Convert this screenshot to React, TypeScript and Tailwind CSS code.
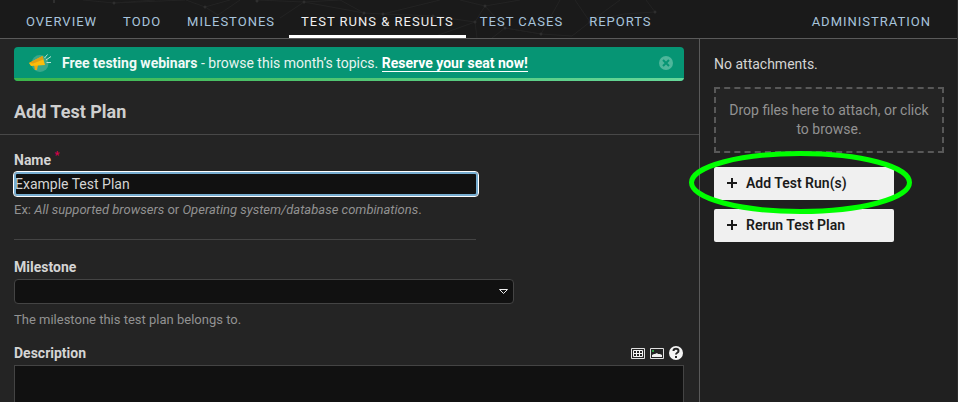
import type { ReactNode } from "react";

const links: { label: string; active?: boolean }[] = [
  { label: "OVERVIEW" },
  { label: "TODO" },
  { label: "MILESTONES" },
  { label: "TEST RUNS & RESULTS", active: true },
  { label: "TEST CASES" },
  { label: "REPORTS" },
];

function Constellation() {
  return (
    <svg
      className="pointer-events-none absolute left-0 top-0 h-[38px] w-[958px]"
      viewBox="0 0 958 38"
      fill="none"
      stroke="#232323"
      aria-hidden="true"
    >
      <path d="M54 0v3" stroke="#444" />
      <path d="M83 0 114 3 155 0M114 3 185 0M186 0 205 7 218 15 240 0M205 7 230 0M218 15 212 30M257 0 304 2 280 18M304 2 364 13 383 14 440 0M304 2 340 0 364 13M364 13 350 30M383 14 433 16 475 22 485 6 505 28 541 34 560 0M485 6 460 0M485 6 520 0M475 22 433 37M475 22 477 38M505 28 492 38M505 28 541 34 572 36 590 22 620 0M590 22 575 0M646 0 655 12 624 14 590 22" />
      <g fill="#2e2e2e" stroke="none">
        <circle cx="114" cy="3" r="1.5" />
        <circle cx="205" cy="7" r="1.5" />
        <circle cx="257" cy="1" r="1.5" />
        <circle cx="304" cy="2" r="1.5" />
        <circle cx="364" cy="13" r="1.5" />
        <circle cx="383" cy="14" r="1.5" />
        <circle cx="433" cy="16" r="1.5" />
        <circle cx="475" cy="22" r="1.5" />
        <circle cx="485" cy="6" r="1.5" />
        <circle cx="505" cy="28" r="1.5" />
        <circle cx="541" cy="34" r="1.5" />
        <circle cx="590" cy="22" r="1.5" />
        <circle cx="655" cy="12" r="1.5" />
      </g>
    </svg>
  );
}

function Megaphone() {
  return (
    <svg width="24" height="20" viewBox="0 0 24 20" fill="none" aria-hidden="true">
      <circle cx="12" cy="10.500" r="8.500" fill="#3aa78a" />
      <path d="M6 12h4l-1 5H7z" fill="#f0a90a" />
      <path d="M1 10 14.500 3l2.500 9-14 1z" fill="#fdbd0b" />
      <path d="M1 10 14.500 3l1 3.500L5 10.500z" fill="#e0a012" />
      <path d="m16.500 5 3-3.500M18 7l5-3.500M18.500 9.500H23" stroke="#b9e6d8" strokeWidth="1" />
    </svg>
  );
}

function PlusIcon() {
  return (
    <svg width="10" height="10" viewBox="0 0 10 10" stroke="#1a1a1a" strokeWidth="2" aria-hidden="true">
      <path d="M5 0v10M0 5h10" />
    </svg>
  );
}

function SideButton({ children }: { children: ReactNode }) {
  return (
    <button
      type="button"
      className="flex h-[33px] w-[180px] items-center gap-[9px] rounded-xs bg-[#f0f0f0] pb-px pl-[13px] text-sm font-semibold text-[#1a1a1a]"
    >
      <PlusIcon />
      {children}
    </button>
  );
}

export default function App() {
  return (
    <div className="flex h-screen flex-col overflow-hidden border-r border-[#2b2b2b] bg-[#242424] font-[Roboto,sans-serif] text-sm text-[#d4d4d4]">
      <header className="relative shrink-0 overflow-hidden border-b border-[#5a5a5a] bg-[#1a1a1a]">
        <Constellation />
        <nav className="relative flex h-[38px] items-stretch gap-[2px] px-[14px] text-[13px] tracking-[1px]">
          {links.map(({ label, active }) => (
            <a
              key={label}
              href="#"
              className={
                active
                  ? "border-b-3 border-white px-3 pt-3 leading-5 whitespace-nowrap text-[#f0f0f0]"
                  : "px-3 pt-3 leading-5 whitespace-nowrap text-[#a8c4dc]"
              }
            >
              {label}
            </a>
          ))}
          <a href="#" className="ml-auto px-3 pt-3 leading-5 text-[#a8c4dc]">
            ADMINISTRATION
          </a>
        </nav>
      </header>

      <div className="flex min-h-0 flex-1">
        <main className="min-w-0 flex-1 overflow-hidden pt-2">
          <div className="mr-[15px] ml-[14px] overflow-hidden rounded bg-[#069574]">
            <div className="flex h-[31px] items-center pl-[14px] pr-[11px]">
              <Megaphone />
              <p className="ml-[10px] flex-1 whitespace-nowrap text-[#e8f4f0]">
                <b className="text-[#f0faf7]">Free testing webinars</b> - browse this month’s topics.{" "}
                <a href="#" className="border-b border-white font-bold text-white">
                  Reserve your seat now!
                </a>
              </p>
              <button type="button" aria-label="Close">
                <svg width="14" height="14" viewBox="0 0 14 14" aria-hidden="true">
                  <circle cx="7" cy="7" r="7" fill="#4eb69b" />
                  <path d="m4 4 6 6M10 4l-6 6" stroke="#069574" strokeWidth="2" />
                </svg>
              </button>
            </div>
            <div className="h-[3px] bg-linear-to-r from-[#3cb54a] to-[#66d79a]" />
          </div>

          <h1 className="mt-[17px] border-b border-[#484848] px-[14px] pb-2 text-lg leading-7 font-bold text-[#cfcfcf]">
            Add Test Plan
          </h1>

          <form className="pt-[15px] pr-[15px] pl-[14px]">
            <label htmlFor="name" className="block leading-5 font-bold">
              Name <span className="align-top text-[11px] leading-none text-[#d9004c]">*</span>
            </label>
            <input
              id="name"
              defaultValue="Example Test Plan"
              className="-ml-px mt-px block h-[26px] w-[466px] max-w-full rounded border border-white bg-[#111] px-px text-sm text-[#d4d4d4] outline-none ring-2 ring-[#77add0] ring-inset"
            />
            <p className="mt-[3px] text-[13px] leading-5 text-[#929292]">
              Ex: <i>All supported browsers</i> or <i>Operating system/database combinations</i>.
            </p>
            <hr className="mt-[19px] w-[462px] max-w-full border-[#444]" />

            <label htmlFor="milestone" className="mt-[17px] block leading-5 font-bold">
              Milestone
            </label>
            <div className="relative mt-[2px] w-[500px] max-w-full">
              <select
                id="milestone"
                className="block h-[25px] w-full appearance-none rounded border border-[#444] bg-[#111] outline-none"
              >
                <option value=""></option>
              </select>
              <svg
                className="pointer-events-none absolute top-[10px] right-[6px]"
                width="9"
                height="6"
                viewBox="0 0 9 6"
                fill="none"
                stroke="#f0f0f0"
                aria-hidden="true"
              >
                <path d="M.5.5h8l-4 4z" />
              </svg>
            </div>
            <p className="mt-[6px] text-[13px] leading-5 text-[#929292]">The milestone this test plan belongs to.</p>

            <div className="mt-[13px] flex items-center justify-between">
              <label htmlFor="description" className="leading-5 font-bold">
                Description
              </label>
              <div className="flex items-center gap-[5px] pr-px">
                <button type="button" aria-label="Insert table">
                  <svg width="14" height="11" viewBox="0 0 14 11" fill="none" aria-hidden="true">
                    <path d="M.5.5h13v10H.5z" stroke="#e0e0e0" />
                    <path d="M2.500 2.500h9v6h-9zM2.500 5.500h9M5.500 2.500v6M8.500 2.500v6" stroke="#f4f4f4" />
                  </svg>
                </button>
                <button type="button" aria-label="Insert image">
                  <svg width="14" height="11" viewBox="0 0 14 11" fill="none" aria-hidden="true">
                    <path d="M.5.5h13v10H.5z" stroke="#e0e0e0" />
                    <path d="M2 2h2v2H2z" fill="#2e9e42" />
                    <path d="M2 9V7l2-1h1l2-1 1 1h2l2 1v2z" fill="#f0f0f0" />
                  </svg>
                </button>
                <button type="button" aria-label="Help">
                  <svg width="14" height="14" viewBox="0 0 14 14" fill="none" aria-hidden="true">
                    <circle cx="7" cy="7" r="7" fill="#f4f4f4" />
                    <path d="M4.500 5c0-3 5-3 5 0 0 2-2.500 1.500-2.500 3.500M7 10v2" stroke="#242424" strokeWidth="2" />
                  </svg>
                </button>
              </div>
            </div>
            <textarea
              id="description"
              className="mt-[2px] block h-40 w-full resize-none border border-[#444] bg-[#111] outline-none"
            />
          </form>
        </main>

        <aside className="w-[258px] shrink-0 border-l border-[#5a5a5a] bg-[#202020] px-[14px] pt-[15px]">
          <p className="leading-5">No attachments.</p>
          <div className="mt-[13px] flex h-[66px] w-[230px] items-center border-2 border-dashed border-[#585858] bg-[#242424] px-3 text-center leading-[19px] text-[#929292]">
            Drop files here to attach, or click to browse.
          </div>
          <div className="relative mt-[14px] flex flex-col gap-[9px]">
            <SideButton>Add Test Run(s)</SideButton>
            <SideButton>Rerun Test Plan</SideButton>
            <svg
              className="pointer-events-none absolute -top-4 -left-[25px] h-[63px] w-[223px]"
              viewBox="0 0 223 63"
              fill="none"
              aria-hidden="true"
            >
              <ellipse cx="111.500" cy="31.500" rx="109" ry="29" stroke="#00ff00" strokeWidth="5" />
            </svg>
          </div>
        </aside>
      </div>
    </div>
  );
}
